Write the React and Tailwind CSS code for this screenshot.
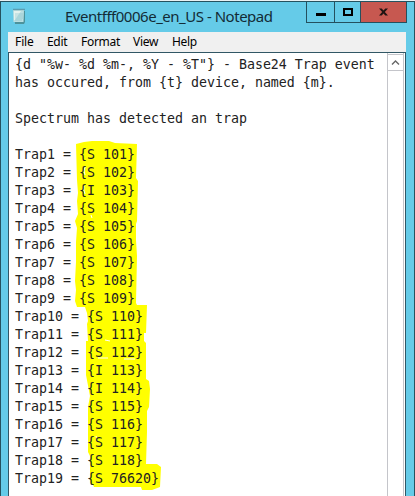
const intro = [
  '{d "%w- %d %m-, %Y - %T"} - Base24 Trap event',
  'has occured, from {t} device, named {m}.',
  '',
  'Spectrum has detected an trap',
  '',
];

const traps = [
  'S 101', 'S 102', 'I 103', 'S 104', 'S 105', 'S 106', 'S 107', 'S 108', 'S 109',
  'S 110', 'S 111', 'S 112', 'I 113', 'I 114', 'S 115', 'S 116', 'S 117', 'S 118', 'S 76620',
];

const menu = [
  ['File', 'w-8', 'tracking-[-0.1px]'],
  ['Edit', 'w-[34px]', 'tracking-[-0.3px]'],
  ['Format', 'w-[52px]', 'tracking-[-0.3px]'],
  ['View', 'w-[39px]', 'tracking-[-0.3px]'],
  ['Help', 'w-8', 'tracking-[-0.3px]'],
];

function NotepadIcon() {
  return (
    <svg width="15" height="18" viewBox="0 0 15 18">
      <path d="M2 3h11v11l-1 2H3z" fill="#4c929b" />
      <path d="M1 2h11l-.5 12H1.5z" fill="#b9dfe2" />
      <path d="M2 3h7L3 12H2z" fill="#e4f2ee" />
      <path d="M3 6h8M3 8h8M3 10h8M3 12h7" stroke="#87bfca" strokeWidth=".6" />
      <path d="M1.5 1.5h11" stroke="#536f78" strokeWidth="1.5" strokeDasharray="1 1" />
    </svg>
  );
}

function Highlighter() {
  return (
    <svg className="absolute left-0 top-0" width="170" height="443" viewBox="0 53 170 443">
      <path
        fill="#ffff00"
        d="M76 144L84 142L92 141H109L115 143L137 144L136 178L138 181L137 221L136 224L136 240L137 256L136 303L137 305H147L146 333H144V341L146 343V379L149 381L150 389L149 407L147 411V432L146 464H157L161 467L160 487L152 490H142L141 487H94L93 485L90 483V456L88 452V407L90 396L86 375L86 341H88L87 324L88 321L87 313L85 307H77L75 301L76 290L75 281L76 262V242L77 228L75 221L78 214L77 201L78 193L77 180Z"
      />
      <path d="M85 167Q83 171 85 175M84 186Q83 190 85 194M91 215l1 3M105 340l5 1M98 358h10M124 359h11M96 436l1 5" fill="none" stroke="#fff" strokeWidth="1" />
    </svg>
  );
}

export default function App() {
  return (
    <div className="h-[496px] w-[415px] overflow-hidden bg-[#e8f1f3] pt-[1px] font-['Noto_Sans','Open_Sans',sans-serif] text-black">
      <div className="flex h-[495px] w-[415px] flex-col border-x border-t border-[#25525f] bg-[#65cbe8]">
        <header className="flex h-[30px] shrink-0 items-start">
          <div className="ml-[11px] mt-[6px] shrink-0"><NotepadIcon /></div>
          <h1 className="ml-[38px] mt-[3px] w-[230px] shrink-0 whitespace-nowrap text-[15px] leading-[23px] tracking-[-0.48px] text-[#132b36]">Eventfff0006e_en_US - Notepad</h1>
          <div className="ml-[11px] flex h-[21px] w-[101px] shrink-0 border-x border-b border-[#24505e]">
            <div className="flex w-[28px] items-center justify-center border-r border-[#24505e]">
              <i className="mt-[4px] h-[3px] w-[10px] bg-black" />
            </div>
            <div className="flex w-[26px] items-center justify-center border-r border-[#24505e]">
              <i className="h-[8px] w-[10px] border-2 border-black" />
            </div>
            <div className="flex flex-1 items-center justify-center bg-[#c75850]">
              <svg width="9" height="8" viewBox="0 0 10 8"><path d="M0 0h3l2 2.4L7 0h3L6.5 4 10 8H7L5 5.6 3 8H0l3.5-4z" fill="#201413" /></svg>
            </div>
          </div>
        </header>
        <main className="ml-[7px] flex w-[398px] flex-1 flex-col bg-white">
          <nav className="flex h-5 shrink-0 bg-[#f0f0f0] pl-[7px] text-[12px] leading-5">
            {menu.map(([label, width, tracking]) => (
              <span key={label} className={`${width} ${tracking} shrink-0`}>{label}</span>
            ))}
          </nav>
          <div className="flex flex-1 border-x border-t border-[#315765] bg-white">
            <pre className="relative -ml-[9px] w-[387px] shrink-0 pl-[15px] pt-[3px] font-['DejaVu_Sans_Mono',monospace] text-[13.29px] leading-[18px] text-[#222222]">
              <Highlighter />
              <div className="relative">
                {intro.map((line, i) => <div key={i} className="h-[18px]">{line}</div>)}
                {traps.map((value, i) => <div key={value} className="h-[18px]">{`Trap${i + 1} = {${value}}`}</div>)}
              </div>
            </pre>
            <aside className="w-[17px] shrink-0 border-x border-[#c4c5ca]">
              <div className="mt-[1px] flex h-[17px] items-center justify-center border-y border-[#c4c5ca]">
                <svg width="9" height="7" viewBox="0 0 9 7"><path d="M1 5.5L4.5 2 8 5.5" fill="none" stroke="#666" strokeWidth="1.4" /></svg>
              </div>
            </aside>
          </div>
        </main>
      </div>
    </div>
  );
}
